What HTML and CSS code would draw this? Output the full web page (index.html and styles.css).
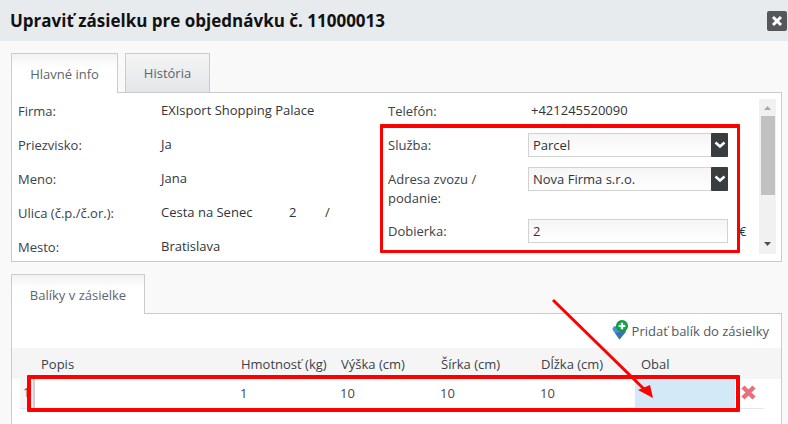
FILE: index.html
```html
<!DOCTYPE html>
<html lang="sk">
<head>
<meta charset="utf-8">
<title>Upraviť zásielku</title>
<link rel="stylesheet" href="styles.css">
</head>
<body>
<header class="head">
  <h1 class="title">Upraviť zásielku pre objednávku č. 11000013</h1>
  <button class="close" type="button" aria-label="Zavrieť">
    <svg width="12" height="12" viewBox="0 0 12 12"><path d="M2 2l8 8M10 2l-8 8" stroke="#fff" stroke-width="3"/></svg>
  </button>
</header>
<main class="content">
  <nav class="tabs">
    <div class="tab active tab-info">Hlavné info</div>
    <div class="tab inactive tab-hist">História</div>
  </nav>
  <section class="panel info">
    <div class="col col-left">
      <div class="row"><span class="lab">Firma:</span><span class="val">EXIsport Shopping Palace</span></div>
      <div class="row"><span class="lab">Priezvisko:</span><span class="val">Ja</span></div>
      <div class="row"><span class="lab">Meno:</span><span class="val">Jana</span></div>
      <div class="row"><span class="lab">Ulica (č.p./č.or.):</span><span class="val street"><span class="s1">Cesta na Senec</span><span class="s2">2</span><span>/</span></span></div>
      <div class="row"><span class="lab">Mesto:</span><span class="val">Bratislava</span></div>
    </div>
    <div class="col col-right">
      <div class="row row-first"><span class="lab">Telefón:</span><span class="val val-r">+421245520090</span></div>
      <div class="row"><span class="lab lab-s">Služba:</span><div class="select"><span>Parcel</span><i class="drop"><svg width="12" height="8" viewBox="0 0 12 8"><path d="M1.500 1.500L6 5.500l4.500-4" fill="none" stroke="#fff" stroke-width="2.500"/></svg></i></div></div>
      <div class="row row-tall"><span class="lab lab-wrap">Adresa zvozu / podanie:</span><div class="select"><span>Nova Firma s.r.o.</span><i class="drop"><svg width="12" height="8" viewBox="0 0 12 8"><path d="M1.500 1.500L6 5.500l4.500-4" fill="none" stroke="#fff" stroke-width="2.500"/></svg></i></div></div>
      <div class="row"><span class="lab lab-s">Dobierka:</span><div class="select input"><span>2</span></div><span class="euro">€</span></div>
    </div>
    <div class="scrollbar">
      <svg class="sb-arrow" width="7" height="4" viewBox="0 0 7 4"><path d="M3.500 0L7 4H0z" fill="#a9a9a9"/></svg>
      <div class="thumb"></div>
      <svg class="sb-arrow sb-down" width="7" height="4" viewBox="0 0 7 4"><path d="M0 0h7L3.500 4z" fill="#505050"/></svg>
    </div>
  </section>
  <nav class="tabs tabs-2">
    <div class="tab active tab-bal">Balíky v zásielke</div>
  </nav>
  <section class="panel packages">
    <div class="add-line">
      <span class="add">
        <svg class="add-icon" width="19" height="20" viewBox="0 0 19 20">
          <path d="M0.500 9.500Q0.500 6 4 6H10L14 11.500L7.500 19.500Z" fill="#4a90d6"/>
          <path d="M7.500 19.500L14 11.500L8 12L3 13Z" fill="#3a74b0"/>
          <circle cx="10" cy="6" r="6" fill="#0c9a3c"/>
          <circle cx="10" cy="6" r="4.300" fill="#12b04a"/>
          <path d="M10 2.700v6.600M6.700 6h6.600" stroke="#fff" stroke-width="2.200"/>
        </svg>
        Pridať balík do zásielky
      </span>
    </div>
    <div class="thead">
      <span class="c c-popis">Popis</span>
      <span class="c">Hmotnosť (kg)</span>
      <span class="c">Výška (cm)</span>
      <span class="c">Šírka (cm)</span>
      <span class="c">Dĺžka (cm)</span>
      <span class="c">Obal</span>
    </div>
    <div class="tline">
      <div class="tbody">
        <span class="num">1</span>
        <span class="c c-blank"></span>
        <span class="c cell">1</span>
        <span class="c cell">10</span>
        <span class="c cell">10</span>
        <span class="c cell">10</span>
        <span class="obal"></span>
      </div>
      <svg class="del" width="15" height="15" viewBox="0 0 15 15"><path d="M2 2l11 11M13 2L2 13" stroke="#e86f7c" stroke-width="4.500"/></svg>
    </div>
  </section>
</main>
<div class="mark mark-a"></div>
<div class="mark mark-b"></div>
<svg class="arrow" width="788" height="424" viewBox="0 0 788 424">
  <path d="M553 300L645 390" stroke="#f00" stroke-width="3" fill="none"/>
  <path d="M653 398L638 390L650 385z" fill="#f00"/>
</svg>
</body>
</html>
```
FILE: styles.css
```css
* { box-sizing: border-box; }
html, body { margin: 0; padding: 0; }
body {
  width: 788px;
  height: 424px;
  overflow: hidden;
  position: relative;
  background: #f9f9f9;
  font-family: "Open Sans", sans-serif;
  font-size: 13px;
  color: #3a4149;
}
.head {
  height: 41px;
  background: #e8ebee;
  display: flex;
  align-items: center;
  justify-content: space-between;
  padding: 0 1px 0 10px;
}
.title {
  margin: 0;
  font-size: 17px;
  font-weight: 700;
  color: #111;
}
.close {
  width: 20px;
  height: 20px;
  padding: 0;
  border: 0;
  border-radius: 2px;
  background: #54585c;
  display: flex;
  align-items: center;
  justify-content: center;
}
.content { padding: 12px 6px 0 11px; }
.tabs { display: flex; gap: 7px; height: 40px; }
.tab {
  height: 40px;
  border: 1px solid #cbcbcb;
  border-bottom: 0;
  display: flex;
  align-items: center;
  justify-content: center;
  color: #5b6570;
}
.tab.active {
  background: linear-gradient(#f2f2f2, #fff 35%);
  z-index: 1;
}
.tab.inactive {
  height: 39px;
  background: linear-gradient(#f3f4f5, #e3e6e9);
}
.tab-info { width: 107px; }
.tab-hist { width: 85px; }
.tab-bal { width: 134px; }
.panel {
  background: #fff;
  border: 1px solid #cbcbcb;
  margin-top: -1px;
}
.info {
  height: 170px;
  display: flex;
  position: relative;
  overflow: hidden;
}
.col-left { width: 370px; padding-left: 6px; }
.col-right { width: 370px; padding-left: 6px; }
.row { display: flex; align-items: center; height: 34px; }
.row-first { margin-bottom: 1px; }
.row-tall { height: 52px; align-items: flex-start; padding-top: 5px; }
.lab { width: 143px; flex: none; position: relative; top: 1px; }
.col-right .lab { width: 140px; }
.col-right .lab-s { top: 0; }
.col-right .lab-wrap { line-height: 19px; width: 118px; margin-right: 22px; top: 3px; }
.val { color: #2f353b; }
.val-r { margin-left: 3px; }
.street { display: flex; }
.s1 { width: 128px; }
.s2 { width: 36px; }
.select {
  width: 200px;
  height: 24px;
  flex: none;
  border: 1px solid #d2d2d2;
  background: linear-gradient(#f5f5f5, #fff);
  display: flex;
  align-items: center;
  justify-content: space-between;
  padding-left: 4px;
  color: #2f353b;
}
.drop {
  width: 17px;
  height: 24px;
  margin: -1px -1px -1px 0;
  background: #3a3d40;
  display: flex;
  align-items: flex-start;
  justify-content: center;
  padding-top: 8px;
  border-radius: 1px;
}
.euro { margin-left: 11px; color: #2f353b; }
.scrollbar {
  position: absolute;
  right: 5px;
  top: 6px;
  width: 17px;
  height: 155px;
  background: #f1f1f1;
  display: flex;
  flex-direction: column;
  align-items: center;
  padding-top: 7px;
}
.thumb { width: 14px; height: 79px; background: #c1c1c1; margin-top: 6px; }
.sb-down { margin-top: 47px; }
.tabs-2 { margin-top: 12px; }
.packages { height: 120px; }
.add-line {
  height: 34px;
  display: flex;
  justify-content: flex-end;
  align-items: center;
  padding-right: 12px;
}
.add { display: flex; align-items: center; gap: 1px; color: #4f5a66; }
.add-icon { position: relative; top: -1px; }
.thead {
  height: 31px;
  background: #f5f5f5;
  display: grid;
  grid-template-columns: 200px 100px 100px 100px 100px 100px;
  padding-left: 29px;
  align-items: center;
}
.tline { display: flex; align-items: flex-start; }
.tbody {
  width: 744px;
  height: 30px;
  margin-left: 8px;
  border-bottom: 1px solid #e6e6e6;
  display: grid;
  grid-template-columns: 15px 205px 100px 100px 100px 95px 100px;
  align-items: center;
  color: #3f4a55;
}
.cell { position: relative; top: -1px; }
.num { padding-left: 3px; background: #f5f5f5; height: 29px; line-height: 27px; border-right: 2px solid #cfcfcf; }
.c-blank { height: 29px; }
.obal { height: 28px; background: #d4e9f7; margin-top: 1px; align-self: start; }
.del { margin: 6px 0 0 -23px; position: relative; z-index: 2; }
.mark { position: absolute; border-style: solid; border-color: #f00; border-radius: 1px; }
.mark-a { left: 380px; top: 124px; width: 360px; height: 129px; border-width: 4px 3px 3px; }
.mark-b { left: 27px; top: 375px; width: 713px; height: 37px; border-width: 4px; }
.arrow { position: absolute; left: 0; top: 0; pointer-events: none; }
```
